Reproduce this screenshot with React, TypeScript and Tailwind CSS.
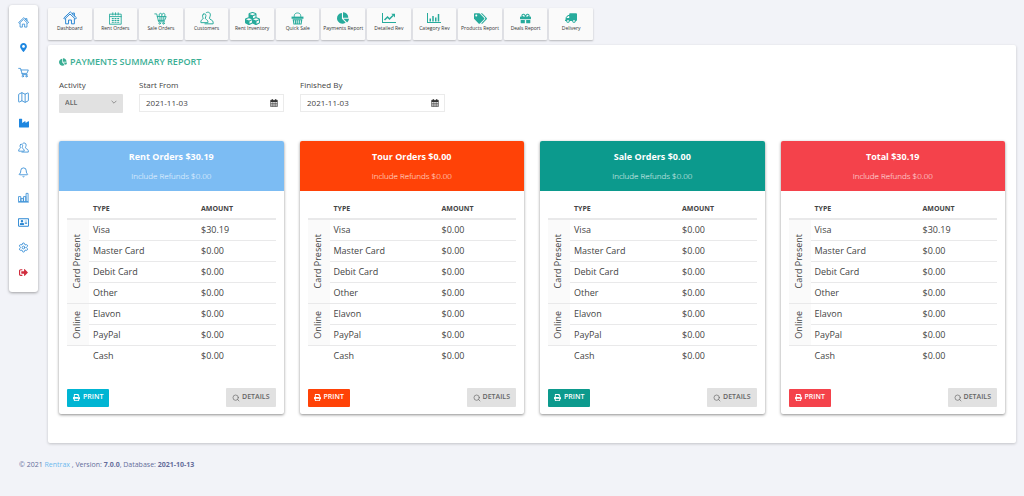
import type { ReactNode } from "react";
import { Bell, Map, Search, Settings } from "lucide-react";
import {
  FaChartPie,
  FaCubes,
  FaGift,
  FaIndustry,
  FaMapMarkerAlt,
  FaPrint,
  FaRegAddressCard,
  FaSignOutAlt,
  FaTags,
  FaTruck,
} from "react-icons/fa";

type IconProps = { className?: string };

function LineIcon({ className, children }: IconProps & { children: ReactNode }) {
  return (
    <svg
      viewBox="0 0 24 24"
      fill="none"
      stroke="currentColor"
      strokeWidth="1.7"
      strokeLinejoin="round"
      strokeLinecap="round"
      className={className}
      aria-hidden="true"
    >
      {children}
    </svg>
  );
}

function HomeIcon({ className }: IconProps) {
  return (
    <LineIcon className={className}>
      <path d="M12 2 1.2 12.2l1.6 1.6L12 5.2l9.2 8.6 1.6-1.6z" />
      <path d="M4.5 13.5V22h5v-6.5h5V22h5v-8.5" />
      <path d="M16.5 5.5v-2h3v5" />
    </LineIcon>
  );
}

function CartIcon({ className }: IconProps) {
  return (
    <LineIcon className={className}>
      <path d="M1.5 3h4l4 13.5H20" />
      <path d="M6.5 6.5h16l-3 7.5H8.800" />
      <circle cx="10.5" cy="20" r="1.7" />
      <circle cx="18.5" cy="20" r="1.7" />
    </LineIcon>
  );
}

function FullCartIcon({ className }: IconProps) {
  return (
    <LineIcon className={className}>
      <path d="M1.5 3.5H5L8.5 18h11" />
      <path d="M6 8.5h16.5l-3 7H8" />
      <path d="M9.5 8.5V4l3-2 2 2.500v4M14.500 4.500 18 2l2 2v4.500" />
      <path d="M11 8.500v7M14.500 8.500v7M18 8.500v7" />
      <circle cx="10.5" cy="21" r="1.5" />
      <circle cx="17.5" cy="21" r="1.5" />
    </LineIcon>
  );
}

function UsersIcon({ className }: IconProps) {
  return (
    <LineIcon className={className}>
      <path d="M5.500 5.500c1.500-1.500 4.500-.5 4.700 2 .2 2-1 3.500-1.200 5 0 1.500 4 2.500 4.500 5v2.500H1.500v-2.500c.5-3 4-3 4-5C4.500 11 3.500 7 5.500 5.500z" />
      <path d="M10.500 3c3-2.500 7.500-.5 7.300 4-.1 2.500-1.600 3.500-1.600 5.500 0 2.500 6 2.500 6.300 6.500v3H8.500" />
    </LineIcon>
  );
}

function CalendarGridIcon({ className }: IconProps) {
  return (
    <LineIcon className={className}>
      <path d="M1.500 4h21v18.500h-21zM1.500 8.500h21M7 1.500v4M12 1.500v4M17 1.500v4" />
      <path d="M6 12h2M11 12h2M16 12h2M6 15.500h2M11 15.500h2M16 15.500h2M6 19h2M11 19h2M16 19h2" strokeWidth="2" />
    </LineIcon>
  );
}

function OutlineBarsIcon({ className }: IconProps) {
  return (
    <LineIcon className={className}>
      <path d="M2 10h4v11H2zM7.500 14h4v7h-4zM13 10h4v11h-4zM18.500 3H22v18h-3.500zM1 22h22" />
    </LineIcon>
  );
}

function BasketIcon({ className }: IconProps) {
  return (
    <svg viewBox="0 0 24 24" fill="currentColor" className={className} aria-hidden="true">
      <path d="M6 9V7c0-7 12-7 12 0v2" fill="none" stroke="currentColor" strokeWidth="1.7" />
      <path d="M1 8.500h22v4H1z" />
      <path
        fillRule="evenodd"
        d="M3 13.500h18L19.500 23h-15zM6 15v6h1.500v-6zM10 15v6h1.500v-6zM13.500 15v6H15v-6zM17 15v6h1.500v-6z"
      />
    </svg>
  );
}

function LineChartIcon({ className }: IconProps) {
  return (
    <svg viewBox="0 0 28 24" fill="currentColor" className={className} aria-hidden="true">
      <path d="M0 2h2v18h26v2H0z" />
      <path d="m5 16 6-6 4 4 7-7" fill="none" stroke="currentColor" strokeWidth="3" />
      <path d="M18.500 3.500H26V11z" />
    </svg>
  );
}

function BarChartIcon({ className }: IconProps) {
  return (
    <svg viewBox="0 0 28 24" fill="currentColor" className={className} aria-hidden="true">
      <path d="M0 2h2v18h26v2H0zM5 13h3v6H5zM10.500 8h3v11h-3zM16 11h3v8h-3zM21.500 4h3v15h-3z" />
    </svg>
  );
}

function DateIcon({ className }: IconProps) {
  return (
    <svg viewBox="0 0 24 24" className={className} aria-hidden="true">
      <path d="M2 4h20v19H2z" fill="none" stroke="currentColor" strokeWidth="2" />
      <path d="M2 4h20v5H2zM5 1h4v5H5zM15 1h4v5h-4z" fill="currentColor" />
      <path d="M2 13.500h20M2 18h20M7 9v14M12 9v14M17 9v14" stroke="currentColor" strokeWidth="1.5" />
    </svg>
  );
}

const sidebarLinks = [
  { label: "Home", icon: <HomeIcon className="size-[11px]" /> },
  { label: "Locations", icon: <FaMapMarkerAlt className="size-[9px] text-[#1f87e0]" /> },
  { label: "Cart", icon: <CartIcon className="size-[11px]" /> },
  { label: "Map", icon: <Map className="size-[13px]" strokeWidth={1.5} /> },
  { label: "Inventory", icon: <FaIndustry className="size-[10px] text-[#1f87e0]" /> },
  { label: "Customers", icon: <UsersIcon className="size-[11px]" /> },
  { label: "Notifications", icon: <Bell className="size-[11px]" strokeWidth={1.8} /> },
  { label: "Reports", icon: <OutlineBarsIcon className="size-[11px]" /> },
  { label: "Staff", icon: <FaRegAddressCard className="size-[11px]" /> },
  { label: "Settings", icon: <Settings className="size-[11px]" strokeWidth={1.8} /> },
];

const shortcuts = [
  { label: "Dashboard", icon: <HomeIcon className="size-[14px] text-[#2b87d3]" /> },
  { label: "Rent Orders", icon: <CalendarGridIcon className="size-[13px]" /> },
  { label: "Sale Orders", icon: <FullCartIcon className="size-[13px]" /> },
  { label: "Customers", icon: <UsersIcon className="size-[14px]" /> },
  { label: "Rent Inventory", icon: <FaCubes className="size-[15px]" /> },
  { label: "Quick Sale", icon: <BasketIcon className="size-[13px]" /> },
  { label: "Payments Report", icon: <FaChartPie className="size-[12px]" /> },
  { label: "Detailed Rev", icon: <LineChartIcon className="h-3 w-[14px]" /> },
  { label: "Category Rev", icon: <BarChartIcon className="h-3 w-[14px]" /> },
  { label: "Products Report", icon: <FaTags className="size-[13px]" /> },
  { label: "Deals Report", icon: <FaGift className="size-[11px]" /> },
  { label: "Delivery", icon: <FaTruck className="size-[12px] -scale-x-100" /> },
];

const paymentTypes = ["Visa", "Master Card", "Debit Card", "Other", "Elavon", "PayPal", "Cash"];

type Summary = {
  title: string;
  total: string;
  visa: string;
  header: string;
  button: string;
};

const summaries: Summary[] = [
  { title: "Rent Orders", total: "$30.19", visa: "$30.19", header: "bg-[#7cbcf3]", button: "bg-[#00b5d3]" },
  { title: "Tour Orders", total: "$0.00", visa: "$0.00", header: "bg-[#ff4207]", button: "bg-[#ff4207]" },
  { title: "Sale Orders", total: "$0.00", visa: "$0.00", header: "bg-[#0c9a8d]", button: "bg-[#0c9a8d]" },
  { title: "Total", total: "$30.19", visa: "$30.19", header: "bg-[#f4424b]", button: "bg-[#f4424b]" },
];

function Sidebar() {
  return (
    <nav
      aria-label="Main"
      className="mt-[5px] flex w-[29px] shrink-0 flex-col self-start rounded-[3px] bg-white pt-[5px] pb-[7px] text-[#2b87d3] shadow-[0_1px_3px_rgba(0,0,0,0.35)]"
    >
      {sidebarLinks.map((link) => (
        <a key={link.label} href="#" aria-label={link.label} className="flex h-[25px] items-center justify-center">
          {link.icon}
        </a>
      ))}
      <a href="#" aria-label="Sign out" className="flex h-[25px] items-center justify-center text-[#d02b3c]">
        <FaSignOutAlt className="size-[9px]" />
      </a>
    </nav>
  );
}

function Shortcuts() {
  return (
    <nav aria-label="Shortcuts" className="grid max-w-[545px] grid-cols-12 gap-[2px]">
      {shortcuts.map((item) => (
        <a
          key={item.label}
          href="#"
          className="flex h-8 flex-col items-center rounded-[1px] bg-[#fafafa] pt-[3px] text-[#27ab9c] shadow-[0_1px_2px_rgba(0,0,0,0.25)]"
        >
          <span className="flex h-[14px] items-center">{item.icon}</span>
          <span className="text-[5px] leading-[7px] whitespace-nowrap text-[#333]">{item.label}</span>
        </a>
      ))}
    </nav>
  );
}

function DateField({ id, label }: { id: string; label: string }) {
  return (
    <div className="w-[145px]">
      <label htmlFor={id} className="block leading-[11px]">
        {label}
      </label>
      <div className="mt-1 flex h-[18px] items-center border border-[#ebebeb] pr-[5px] pl-[6px]">
        <input id={id} type="text" defaultValue="2021-11-03" className="min-w-0 flex-1 bg-transparent outline-none" />
        <DateIcon className="size-2 text-[#333]" />
      </div>
    </div>
  );
}

function SummaryCard({ summary }: { summary: Summary }) {
  return (
    <section className="rounded-[2px] bg-white pb-[7px] shadow-[0_1px_3px_rgba(0,0,0,0.45)]">
      <header className={`h-[50px] rounded-t-[2px] pt-[9px] text-center text-white ${summary.header}`}>
        <h2 className="text-[9px] leading-[14px] font-bold">
          {summary.title} {summary.total}
        </h2>
        <p className="mt-[5px] text-[8px] leading-[14px] font-light text-white/90">Include Refunds $0.00</p>
      </header>
      <div className="px-2 pt-2">
        <table className="w-full table-fixed border-collapse text-left text-[9px] leading-[20px]">
          <colgroup>
            <col className="w-[22px]" />
            <col className="w-[108px]" />
            <col />
          </colgroup>
          <thead>
            <tr className="border-b-2 border-[#e9e9ea] text-[7px] leading-[19px]">
              <td />
              <th className="px-1 font-bold">TYPE</th>
              <th className="px-1 font-bold">AMOUNT</th>
            </tr>
          </thead>
          <tbody>
            {paymentTypes.map((type, i) => (
              <tr key={type}>
                {i === 0 && (
                  <th rowSpan={4} className="border-b border-[#e9e9ea] bg-[#fafafa] font-normal">
                    <span className="mx-auto block rotate-180 text-center [writing-mode:vertical-rl]">Card Present</span>
                  </th>
                )}
                {i === 4 && (
                  <th rowSpan={2} className="border-b border-[#e9e9ea] bg-[#fafafa] font-normal">
                    <span className="mx-auto block rotate-180 text-center [writing-mode:vertical-rl]">Online</span>
                  </th>
                )}
                {i === 6 && <td />}
                <td className={i < 6 ? "border-b border-[#e9e9ea] px-1" : "px-1"}>{type}</td>
                <td className={i < 6 ? "border-b border-[#e9e9ea] px-1" : "px-1"}>{i === 0 ? summary.visa : "$0.00"}</td>
              </tr>
            ))}
          </tbody>
        </table>
        <div className="mt-[22px] flex items-center justify-between text-[7px]">
          <button type="button" className={`flex h-[18px] items-center gap-[3px] rounded-[1px] px-[6px] font-semibold text-white ${summary.button}`}>
            <FaPrint className="size-[7px]" />
            PRINT
          </button>
          <button type="button" className="flex h-[19px] items-center gap-[2px] rounded-[1px] bg-[#e1e1e1] px-[6px] font-semibold text-[#666]">
            <Search className="size-2" />
            DETAILS
          </button>
        </div>
      </div>
    </section>
  );
}

export default function App() {
  return (
    <div className="min-h-screen bg-[#f2f3f8] pb-6 font-['Open_Sans',sans-serif] text-[8px] text-[#444]">
      <div className="flex gap-[10px] pr-2 pl-[9px]">
        <Sidebar />
        <div className="min-w-0 flex-1 pt-2">
          <Shortcuts />
          <main className="mt-[5px] rounded-[2px] bg-white px-[11px] pt-[10px] pb-[29px] shadow-[0_1px_3px_rgba(0,0,0,0.2)]">
            <h1 className="flex items-center gap-[3px] text-[9px] leading-[14px] font-semibold text-[#3aae94]">
              <FaChartPie className="size-2" />
              PAYMENTS SUMMARY REPORT
            </h1>
            <form className="mt-[10px] flex items-start gap-4 text-[8px]">
              <div className="w-16">
                <label htmlFor="activity" className="block leading-[11px]">
                  Activity
                </label>
                <div className="relative mt-1">
                  <select
                    id="activity"
                    className="block h-[19px] w-full appearance-none rounded-[1px] bg-[#e1e1e1] px-[6px] text-[7px] font-semibold text-[#666] outline-none"
                  >
                    <option>ALL</option>
                  </select>
                  <svg viewBox="0 0 10 6" className="pointer-events-none absolute top-[6px] right-[6px] h-[4px] w-[6px]" aria-hidden="true">
                    <path d="m1 1 4 4 4-4" fill="none" stroke="#888" strokeWidth="1.5" />
                  </svg>
                </div>
              </div>
              <DateField id="start-from" label="Start From" />
              <DateField id="finished-by" label="Finished By" />
            </form>
            <div className="mt-7 grid grid-cols-4 gap-4">
              {summaries.map((summary) => (
                <SummaryCard key={summary.title} summary={summary} />
              ))}
            </div>
          </main>
        </div>
      </div>
      <footer className="mt-4 pl-[19px] text-[7px] leading-[12px] text-[#646c9a]">
        © 2021 <a href="#" className="text-[#6cb9ee]">Rentrax</a> , Version: <b>7.0.0</b>, Database: <b>2021-10-13</b>
      </footer>
    </div>
  );
}
